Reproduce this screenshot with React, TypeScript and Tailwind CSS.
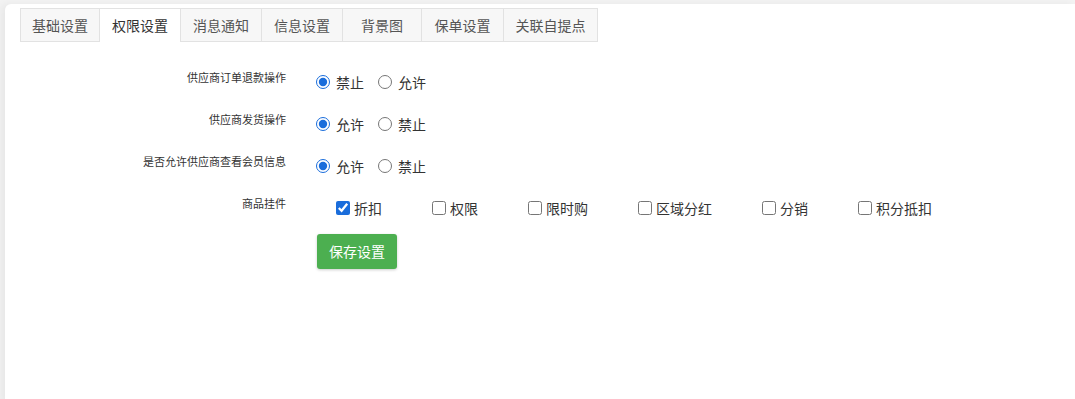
import React from 'react';

const tabs = [
  { name: '基础设置', w: 'w-[80px]' },
  { name: '权限设置', w: 'w-[81px]' },
  { name: '消息通知', w: 'w-[81px]' },
  { name: '信息设置', w: 'w-[81px]' },
  { name: '背景图', w: 'w-[79px]' },
  { name: '保单设置', w: 'w-[82px]' },
  { name: '关联自提点', w: 'w-[94px]' },
];

interface RadioRowProps {
  label: string;
  name: string;
  options: string[];
}

const RadioRow: React.FC<RadioRowProps> = ({ label, name, options }) => {
  return (
    <div className="flex items-center h-[42px]">
      <div className="w-[266px] text-right text-[11px] text-[#333] pb-[10px]">{label}</div>
      <div className="ml-[30px] flex items-center">
        {options.map((opt, i) => (
          <label key={opt} className="flex items-center mr-[14px] text-[14px] text-[#333]">
            <input
              type="radio"
              name={name}
              defaultChecked={i === 0}
              className="m-0 w-[14px] h-[14px] accent-[#1a6ddb]"
            />
            <span className="ml-[6px]">{opt}</span>
          </label>
        ))}
      </div>
    </div>
  );
};

const plugins = ['折扣', '权限', '限时购', '区域分红', '分销', '积分抵扣'];

const App: React.FC = () => {
  return (
    <div
      className="h-screen overflow-hidden bg-[#f3f3f3] pt-[4px] pl-[5px]"
      style={{ fontFamily: '"Noto Sans CJK SC", "Noto Sans", sans-serif' }}
    >
      <div className="bg-white rounded-tl-[6px] shadow-[-4px_0_8px_rgba(0,0,0,0.05)] h-[400px] pl-[15px] pt-[4px]">
        <div className="flex h-[34px]">
          {tabs.map((t, i) => (
            <div
              key={t.name}
              className={
                t.w +
                ' flex items-center justify-center text-[14px] border-t border-r border-[#e2e2e2] ' +
                (i === 0 ? 'border-l ' : '') +
                (i === 1 ? 'bg-white text-[#333]' : 'bg-[#f7f7f7] text-[#555] border-b')
              }
            >
              {t.name}
            </div>
          ))}
        </div>

        <div className="mt-[19px]">
          <RadioRow label="供应商订单退款操作" name="refund" options={['禁止', '允许']} />
          <RadioRow label="供应商发货操作" name="ship" options={['允许', '禁止']} />
          <RadioRow label="是否允许供应商查看会员信息" name="member" options={['允许', '禁止']} />

          <div className="flex items-center h-[42px]">
            <div className="w-[266px] text-right text-[11px] text-[#333] pb-[10px]">商品挂件</div>
            <div className="ml-[50px] flex items-center">
              {plugins.map((p, i) => (
                <label key={p} className="flex items-center mr-[50px] text-[14px] text-[#333]">
                  <input
                    type="checkbox"
                    defaultChecked={i === 0}
                    className="m-0 w-[14px] h-[14px] accent-[#1a6ddb]"
                  />
                  <span className="ml-[4px]">{p}</span>
                </label>
              ))}
            </div>
          </div>

          <div className="ml-[297px] mt-[5px]">
            <button className="w-[80px] h-[35px] bg-[#4caf50] text-white text-[14px] rounded-[3px] shadow-[0_1px_3px_rgba(0,0,0,0.2)]">
              保存设置
            </button>
          </div>
        </div>
      </div>
    </div>
  );
};

export default App;
